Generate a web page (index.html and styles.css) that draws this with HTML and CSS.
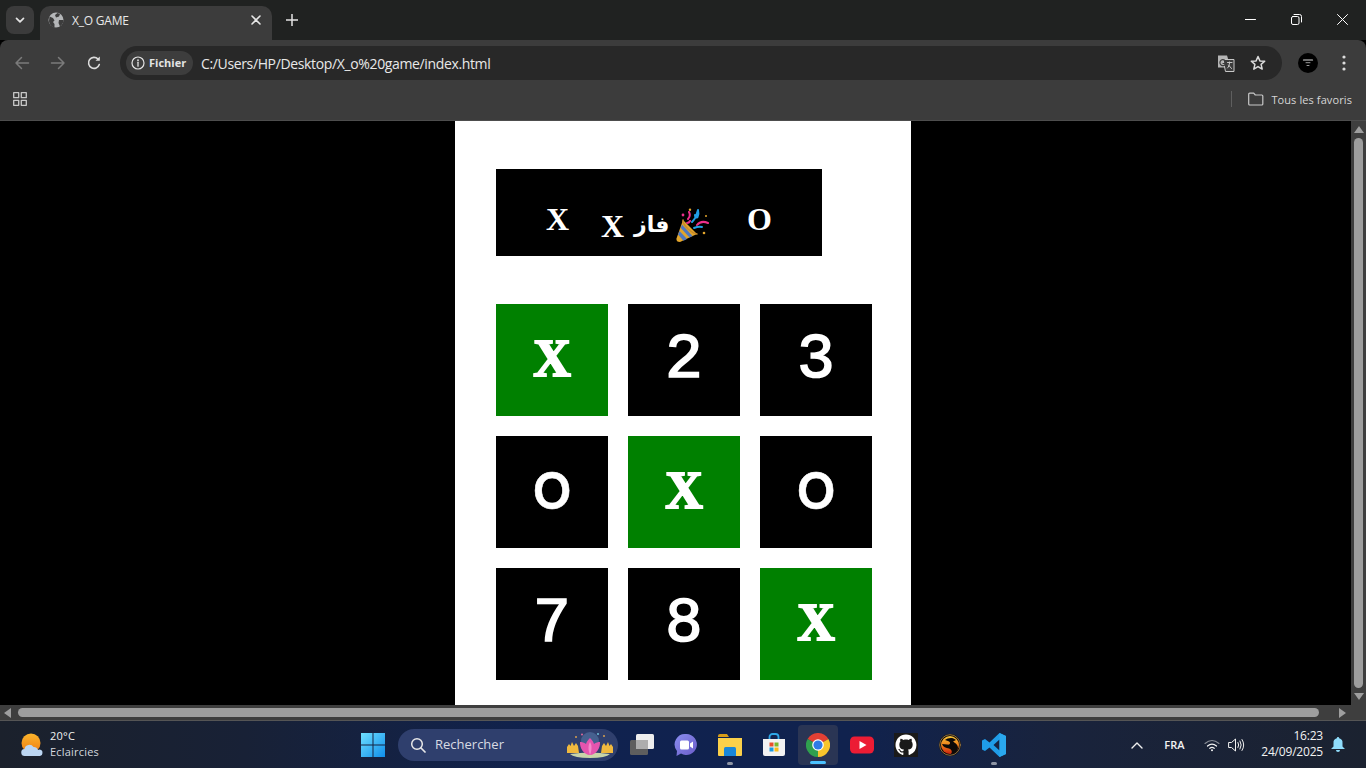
FILE: index.html
```html
<!DOCTYPE html>
<html lang="fr">
<head>
<meta charset="utf-8">
<title>X_O GAME</title>
<link rel="stylesheet" href="styles.css">
</head>
<body>
<div class="screen">
  <header class="tabstrip">
    <div class="tab-search"><svg width="10" height="10" viewBox="0 0 10 10"><path d="M1.5 3.3 5 6.800l3.500-3.500" class="st" stroke="#e3e3e3" stroke-width="1.700"/></svg></div>
    <div class="tab">
      <svg class="globe" width="16" height="16" viewBox="0 0 16 16"><circle cx="8" cy="8" r="7.500" fill="#b4b6b8"/><path d="M1.500 4.500 5 6l1.500 2.500L5 10l1.500 2 0 3.500c-3-.5-5.500-3.500-5.500-6.500zM9.500 1l2.500 1-1 2.500-3 1L7 3zM11 8h4.500c0 3-1.500 5-3.500 6.500L10.500 11z" fill="#3c3c3c"/></svg>
      <span class="tab-title">X_O GAME</span>
      <svg class="tab-x" width="10" height="10" viewBox="0 0 10 10"><path d="M1 1l8 8M9 1 1 9" class="st" stroke="#e6e6e6" stroke-width="1.600"/></svg>
    </div>
    <svg class="plus" width="12" height="12" viewBox="0 0 12 12"><path d="M6 0v12M0 6h12" class="st" stroke="#e3e3e3" stroke-width="1.500"/></svg>
    <div class="win-controls">
      <svg width="11" height="11" viewBox="0 0 11 11"><path d="M0 5.500h10.500" class="st" stroke="#fff"/></svg>
      <svg width="11" height="11" viewBox="0 0 11 11"><rect x=".5" y="2.500" width="7.500" height="8" rx="1.500" class="st" stroke="#fff"/><path d="M3 .5h5.500a2 2 0 0 1 2 2V8" class="st" stroke="#fff"/></svg>
      <svg width="11" height="11" viewBox="0 0 11 11"><path d="M.5.5l10 10M10.500.5l-10 10" class="st" stroke="#fff"/></svg>
    </div>
  </header>

  <nav class="toolbar">
    <svg class="nav-icon first" width="16" height="16" viewBox="0 0 16 16"><path d="M14.500 8H2M7.500 2.500 2 8l5.500 5.500" class="st" stroke="#7b7b7b" stroke-width="1.500"/></svg>
    <svg class="nav-icon" width="16" height="16" viewBox="0 0 16 16"><path d="M1.500 8H14M8.500 2.500 14 8l-5.500 5.500" class="st" stroke="#7b7b7b" stroke-width="1.500"/></svg>
    <svg class="nav-icon" width="16" height="16" viewBox="0 0 16 16"><path d="M13.300 9.500A5.500 5.500 0 1 1 12 4" class="st" stroke="#dcdcdc" stroke-width="1.600"/><path d="M13.800 1.500v4.300H9.500z" fill="#dcdcdc"/></svg>
    <div class="omnibox">
      <div class="chip">
        <svg width="14" height="14" viewBox="0 0 14 14"><circle cx="7" cy="7" r="6" class="st" stroke="#e3e3e3" stroke-width="1.200"/><path d="M7 6.200v4" class="st" stroke="#e3e3e3" stroke-width="1.300"/><circle cx="7" cy="4.200" r=".9" fill="#e3e3e3"/></svg>
        <span class="chip-label">Fichier</span>
      </div>
      <span class="url">C:/Users/HP/Desktop/X_o%20game/index.html</span>
      <svg class="translate" width="18" height="18" viewBox="0 0 18 18"><path d="M1 1.500h9l1 3v9H1z" fill="#b5b5b5"/><path d="M6 5.500h11v12H8.500z" fill="#3c3c3c" stroke="#c7c7c7"/><path d="M8 6.500a3 3 0 1 0 .8 3H6" class="st" stroke="#3c3c3c" stroke-width="1.200"/><path d="M10.500 8.500h4.500M12.500 8v1c0 2-1 4-2 5M11.500 11l3 3.500" class="st" stroke="#c7c7c7"/></svg>
      <svg class="star" width="16" height="16" viewBox="0 0 16 16"><path d="M8 1.500l1.900 4.400 4.800.4-3.600 3.100 1.100 4.700L8 11.600l-4.200 2.500 1.100-4.700L1.300 6.300l4.800-.4z" class="st" stroke="#dcdcdc" stroke-width="1.500"/></svg>
    </div>
    <div class="avatar"><svg width="12" height="8" viewBox="0 0 12 8"><path d="M1.500 1h9" class="st" stroke="#ddd" stroke-width="1.200"/><path d="M4 3.700h4M5 6.500h2" class="st" stroke="#aaa" stroke-width=".9"/></svg></div>
    <svg class="menu" width="4" height="16" viewBox="0 0 4 16"><circle cx="2" cy="2" r="1.600" fill="#dcdcdc"/><circle cx="2" cy="8" r="1.600" fill="#dcdcdc"/><circle cx="2" cy="14" r="1.600" fill="#dcdcdc"/></svg>
  </nav>

  <div class="bookmarks">
    <svg width="16" height="16" viewBox="0 0 16 16"><g class="st" stroke="#c8c8c8" stroke-width="1.300"><rect x="1.700" y="1.700" width="5" height="5"/><rect x="9.300" y="1.700" width="5" height="5"/><rect x="1.700" y="9.300" width="5" height="5"/><rect x="9.300" y="9.300" width="5" height="5"/></g></svg>
    <div class="bm-right">
      <span class="bm-sep"></span>
      <svg width="16" height="14" viewBox="0 0 16 14"><path d="M.7 2.200a1 1 0 0 1 1-1h4l1.600 1.800h6.500a1 1 0 0 1 1 1v8a1 1 0 0 1-1 1H1.700a1 1 0 0 1-1-1z" class="st" stroke="#c8c8c8" stroke-width="1.200"/></svg>
      <span class="bm-label">Tous les favoris</span>
    </div>
  </div>

  <div class="viewport">
    <div class="content-row">
      <main class="page">
        <section class="score">
          <span class="score-x">X</span>
          <span class="winner">X <span class="ar">فاز</span> <svg class="emoji" width="33" height="35" viewBox="0 0 33 35" role="img" aria-label="🎉"><path d="M7 12 21 26 4 34q-4 0-3.500-3.500z" fill="#e2a52c"/><path d="M3.500 23 11 31l-3.500 1.700L2 26.500zM6 16.500 16.500 28l-3 1.500L4.800 20z" fill="#4f78c0"/><path d="M7 12q-1 3 5 9 6 5 9 5" class="st" stroke="#c98a2a" stroke-width="1.500"/><path d="M12 11q3-3 1-7M11 15q2 0 3-2M21 17q4-5 11-2" class="st" stroke="#ee2f8c" stroke-width="2"/><path d="M16 14c3-3 3.500-4 6-12 .8 3 .5 5-.5 7M21 9.500q-2 0-2-2.500M18 20q5-2 8-1" class="st" stroke="#21a0e6" stroke-width="2"/><circle cx="7" cy="7" r="1.400" fill="#ee2f8c"/><circle cx="28" cy="25" r="1.300" fill="#e2a52c"/><circle cx="14" cy="1.800" r="1.200" fill="#e2a52c"/><circle cx="30" cy="8" r="1" fill="#e2a52c"/></svg></span>
          <span class="score-o">O</span>
        </section>
        <section class="board">
          <div class="cell win x">X</div><div class="cell">2</div><div class="cell">3</div>
          <div class="cell o">O</div><div class="cell win x">X</div><div class="cell o">O</div>
          <div class="cell">7</div><div class="cell">8</div><div class="cell win x">X</div>
        </section>
      </main>
      <div class="vscroll">
        <span class="arrow-up"></span>
        <span class="vthumb"></span>
        <span class="arrow-down"></span>
      </div>
    </div>
    <div class="hscroll">
      <span class="arrow-left"></span>
      <span class="hthumb"></span>
      <span class="arrow-right"></span>
    </div>
  </div>

  <footer class="taskbar">
    <div class="weather">
      <svg width="24" height="24" viewBox="0 0 24 24"><defs><linearGradient id="sun" x1="0" y1="0" x2="0" y2="1"><stop offset="0" stop-color="#fbb52c"/><stop offset="1" stop-color="#ef7d12"/></linearGradient></defs><circle cx="11" cy="10" r="9.500" fill="url(#sun)"/><path d="M5 23a3.500 3.500 0 0 1-.5-7 5 5 0 0 1 9-2 4.500 4.500 0 0 1 4.500 3 3 3 0 0 1 4.500 3 3 3 0 0 1-2.500 3z" fill="#bcd6f2"/></svg>
      <div class="weather-text"><span class="temp">20°C</span><span class="cond">Eclaircies</span></div>
    </div>
    <svg class="start" width="24" height="24" viewBox="0 0 24 24"><defs><linearGradient id="w" x1="0" y1="0" x2="1" y2="1"><stop offset="0" stop-color="#6fe0ff"/><stop offset="1" stop-color="#0f8eea"/></linearGradient></defs><path d="M0 0h11.500v11.500H0zM12.500 0H24v11.500H12.500zM0 12.500h11.500V24H0zM12.500 12.500H24V24H12.500z" fill="url(#w)"/></svg>
    <div class="search">
      <svg width="16" height="16" viewBox="0 0 16 16"><circle cx="7" cy="7" r="5.300" class="st" stroke="#e8e8e8" stroke-width="1.500"/><path d="M11 11l4 4" class="st" stroke="#e8e8e8" stroke-width="1.700"/></svg>
      <span class="search-label">Rechercher</span>
      <svg class="lotus" width="46" height="26" viewBox="0 0 46 26"><circle cx="23" cy="9" r="9" fill="#46608f"/><path d="M0 21v-6l2-3 1.500 2 1.500-4 2 4 2-3 2 3 1 7zM46 21v-6l-2-3-1.500 2-1.500-4-2 4-2-3-2 3-1 7z" fill="#f0b93e"/><path d="M3 22q20-3 40 0-4 4-20 4T3 22z" fill="#c9d5a8"/><path d="M23 6c2 2 3.500 4 4 6 2-1.500 4-2 6-2 .5 6-4 13-10 13s-10.500-7-10-13c2 0 4 .5 6 2 .5-2 2-4 4-6z" fill="#e654ae"/><path d="M23 10c2 3 2 8 0 13-2-5-2-10 0-13z" fill="#f589cb"/><circle cx="9" cy="5" r="1" fill="#d8a050"/><circle cx="15" cy="2.500" r="1" fill="#e06a9a"/><circle cx="37" cy="4" r="1" fill="#d8a050"/><circle cx="31" cy="2" r="1" fill="#6fc0d8"/></svg>
    </div>
    <div class="apps">
      <div class="app"><svg width="24" height="24" viewBox="0 0 24 24"><rect x="0" y="7" width="18" height="15" rx="1.500" fill="#5e5e5e"/><rect x="6" y="1" width="18" height="15" rx="1.500" fill="#eeeeee"/><rect x="6" y="7" width="12" height="9" fill="#adadad"/></svg></div>
      <div class="app"><svg width="24" height="24" viewBox="0 0 24 24"><defs><linearGradient id="m" x1="0" y1="0" x2="1" y2="1"><stop offset="0" stop-color="#8a8ef0"/><stop offset="1" stop-color="#6a5cc8"/></linearGradient></defs><path d="M12.500 1a10.500 10.500 0 1 1-5.500 19.500L2.500 23l.5-5A10.500 10.500 0 0 1 12.500 1z" fill="url(#m)"/><rect x="6" y="7.500" width="9" height="9" rx="1.500" fill="#fff"/><path d="M16 10.500l3-2v7l-3-2z" fill="#fff"/></svg></div>
      <div class="app dot"><svg width="24" height="24" viewBox="0 0 24 24"><path d="M0 3a2 2 0 0 1 2-2h7l2 3h-11z" fill="#d79c18"/><path d="M0 5h24v17a1 1 0 0 1-1 1H1a1 1 0 0 1-1-1z" fill="#fbd04a"/><path d="M6 15.500a1.500 1.500 0 0 1 1.500-1.500h9a1.500 1.500 0 0 1 1.500 1.500V23H6z" fill="#1a86d8"/></svg></div>
      <div class="app"><svg width="24" height="24" viewBox="0 0 24 24"><path d="M7.500 6V4a3 3 0 0 1 3-3h3a3 3 0 0 1 3 3v2" class="st" stroke="#2ea7e8" stroke-width="1.800"/><path d="M1 6h22v15a2 2 0 0 1-2 2H3a2 2 0 0 1-2-2z" fill="#f2f2f2"/><rect x="7.500" y="9.500" width="4" height="4" fill="#e8502c"/><rect x="12.500" y="9.500" width="4" height="4" fill="#7cb82c"/><rect x="7.500" y="14.500" width="4" height="4" fill="#1a9ae0"/><rect x="12.500" y="14.500" width="4" height="4" fill="#fbbc18"/></svg></div>
      <div class="app active"><svg width="24" height="24" viewBox="0 0 24 24"><path d="M12 12 1.600 6A12 12 0 0 1 22.400 6z" fill="#e24034"/><path d="M12 12 22.400 6A12 12 0 0 1 12 24z" fill="#f8c52c"/><path d="M12 12 12 24A12 12 0 0 1 1.600 6z" fill="#2fa04e"/><circle cx="12" cy="12" r="5.800" fill="#fff"/><circle cx="12" cy="12" r="4.600" fill="#2f7be6"/></svg></div>
      <div class="app"><svg width="24" height="18" viewBox="0 0 24 18"><rect width="24" height="17" y=".5" rx="4.500" fill="#ec1c34"/><path d="M9.500 5l7 4-7 4z" fill="#fff"/></svg></div>
      <div class="app"><svg width="24" height="24" viewBox="0 0 24 24"><rect width="24" height="24" fill="#1a1a1a"/><g transform="translate(1.500 1.500) scale(1.310)"><path d="M8 0C3.580 0 0 3.580 0 8c0 3.540 2.290 6.530 5.470 7.590.4.070.55-.17.55-.38 0-.19-.01-.82-.01-1.490-2.010.37-2.530-.49-2.690-.94-.09-.23-.48-.94-.82-1.130-.28-.15-.68-.52-.01-.53.63-.01 1.080.58 1.230.82.72 1.210 1.870.87 2.330.66.070-.52.280-.87.510-1.070-1.780-.2-3.640-.89-3.640-3.950 0-.87.310-1.590.820-2.150-.080-.2-.36-1.020.080-2.120 0 0 .67-.21 2.200.82.640-.18 1.320-.27 2-.27.68 0 1.360.09 2 .27 1.530-1.040 2.200-.82 2.200-.82.44 1.100.160 1.920.080 2.120.510.560.820 1.270.820 2.150 0 3.070-1.870 3.750-3.650 3.950.290.250.540.730.540 1.480 0 1.070-.010 1.930-.010 2.200 0 .21.150.460.550.380A8.013 8.013 0 0 0 16 8c0-4.420-3.580-8-8-8z" fill="#fff"/></g></svg></div>
      <div class="app"><svg width="22" height="22" viewBox="0 0 22 22"><defs><linearGradient id="mk" x1="0" y1="0" x2="0" y2="1"><stop offset="0" stop-color="#f4c43a"/><stop offset=".55" stop-color="#ee7a18"/><stop offset="1" stop-color="#c8200e"/></linearGradient></defs><circle cx="11" cy="11" r="11" fill="#0c0a08"/><circle cx="11" cy="11" r="9" fill="url(#mk)"/><circle cx="11" cy="11" r="10.300" class="st" stroke="#b08a50" stroke-width=".8"/><path d="M6 6c3-2.500 8-3 11 0l-3 1.500c2 1.500 5 3 5 6.500-1 4-4 6-7 6 1.500-2 1-4.500-2-5.500C7 14 4 13 3 10l5 .5c2 .5 3.500-.5 3-2C10 7 8 6.500 6 6z" fill="#0c0a08"/></svg></div>
      <div class="app dot"><svg width="24" height="24" viewBox="0 0 24 24"><path d="M17.500 0 24 3v18l-6.500 3L7.500 14.500 3 18l-3-1.500v-9L3 6l4.500 3.500zm0 6.500L11.500 12l6 5.500z" fill="#1f9ce8"/><path d="M17.500 0 24 3v18l-6.500 3z" fill="#2aa8ee"/></svg></div>
    </div>
    <div class="tray">
      <svg class="caret" width="12" height="8" viewBox="0 0 12 8"><path d="M1 7l5-5 5 5" class="st" stroke="#f0f0f0" stroke-width="1.400"/></svg>
      <span class="lang">FRA</span>
      <svg class="wifi" width="16" height="14" viewBox="0 0 16 14"><path d="M1 5.500q7-6 14 0" class="st" stroke="#8a8f98" stroke-width="1.100"/><path d="M3.500 8q4.500-3.800 9 0M5.800 10.300q2.200-1.800 4.400 0" class="st" stroke="#f4f4f4" stroke-width="1.200"/><circle cx="8" cy="12.300" r="1" fill="#f4f4f4"/></svg>
      <svg class="vol" width="17" height="14" viewBox="0 0 17 14"><path d="M1 4.500h2.500L7.500 1v12L3.500 9.500H1z" class="st" stroke="#f0f0f0"/><path d="M10 4.500q1.500 2.500 0 5M12 3q2.500 4 0 8M14 1.500q3.500 5.500 0 11" class="st" stroke="#f0f0f0"/></svg>
      <div class="clock"><span>16:23</span><span>24/09/2025</span></div>
      <svg class="bell" width="14" height="15" viewBox="0 0 14 15"><path d="M7 0a1.200 1.200 0 0 1 1.200 1.200A4.500 4.500 0 0 1 11.500 6v3.500L14 12H0l2.500-2.500V6a4.500 4.500 0 0 1 3.300-4.800A1.200 1.200 0 0 1 7 0z" fill="#8fdcfb"/><path d="M5 13h4a2 2 0 0 1-4 0z" fill="#8fdcfb"/></svg>
    </div>
  </footer>
</div>
</body>
</html>
```

FILE: styles.css
```css
* { box-sizing: border-box; }
html, body { margin: 0; padding: 0; height: 100%; overflow: hidden; }
body { font-family: "Open Sans", "Noto Sans", sans-serif; background: #000; }
svg { display: block; flex: none; }
.st { fill: none; stroke-linecap: round; stroke-linejoin: round; }
.screen { width: 1366px; height: 768px; display: flex; flex-direction: column; }

/* tab strip */
.tabstrip { height: 40px; flex: none; background: #202221; display: flex; align-items: flex-start; padding: 6px 0 0 6px; }
.tab-search { width: 28px; height: 28px; border-radius: 8px; background: #3b3b3b; display: flex; align-items: center; justify-content: center; }
.tab { width: 232px; height: 34px; margin-left: 6px; background: #3c3c3c; border-radius: 10px 10px 0 0; display: flex; align-items: center; padding: 0 11px 6px 8px; color: #e8e8e8; font-size: 12px; }
.globe { margin-right: 8px; }
.tab-title { flex: 1; letter-spacing: -.2px; }
.plus { margin: 8px 0 0 14px; }
.win-controls { margin-left: auto; margin-top: 8px; display: flex; gap: 35px; padding-right: 18px; }

/* toolbar */
.toolbar { height: 40px; flex: none; background: #3c3c3c; border-radius: 8px 8px 0 0; display: flex; align-items: center; padding: 6px 0 0 14px; }
.nav-icon { margin-right: 20px; }
.omnibox { width: 1162px; height: 34px; margin-left: -2px; background: #282828; border-radius: 17px; display: flex; align-items: center; padding: 0 16px 0 6px; }
.chip { height: 24px; width: 67px; border-radius: 12px; background: #3d3d3d; display: flex; align-items: center; gap: 4px; padding-left: 5px; color: #e3e3e3; font-size: 11px; font-weight: 700; }
.chip-label { padding-bottom: 2px; }
.url { flex: 1; margin-left: 8px; color: #e8e8e8; font-size: 14px; letter-spacing: -.36px; }
.translate { margin-right: 15px; }
.avatar { width: 20px; height: 20px; border-radius: 50%; background: #000; margin-left: 16px; display: flex; align-items: center; justify-content: center; }
.menu { margin-left: 24px; }

/* bookmarks */
.bookmarks { height: 41px; flex: none; background: #3c3c3c; border-bottom: 1px solid #4d4d4d; display: flex; align-items: center; padding: 0 14px 2px 12px; }
.bm-right { margin-left: auto; display: flex; align-items: center; }
.bm-sep { width: 1px; height: 16px; background: #5f5f5f; margin-right: 16px; }
.bm-label { margin-left: 7px; color: #d6d6d6; font-size: 11px; letter-spacing: .1px; }

/* viewport */
.viewport { flex: none; height: 600px; display: flex; flex-direction: column; background: #000; }
.content-row { flex: none; height: 584px; display: flex; }
.page { flex: none; width: 456px; height: 584px; margin-left: 455px; margin-right: 440px; background: #fff; padding: 48px 0 0 41px; }
.score { width: 326px; height: 87px; background: #000; color: #fff; font-family: "Liberation Serif", serif; font-weight: 700; font-size: 32px; line-height: 36px; display: flex; align-items: flex-start; padding: 32px 0 0 50px; }
.score-x { width: 55px; }
.winner { display: flex; align-items: center; padding-top: 6px; width: 146px; white-space: pre; }
.ar { flex: none; width: 34px; margin-left: 2px; font-family: "DejaVu Sans", sans-serif; font-size: 22px; font-weight: 700; line-height: 36px; padding-bottom: 2px; }
.emoji { margin: -2px 0 0 8px; }
.score-o { width: 30px; }
.board { margin-top: 48px; display: grid; grid-template-columns: repeat(3, 112px); grid-auto-rows: 112px; gap: 20px; }
.cell { background: #000; color: #fff; font-family: "Liberation Mono", monospace; font-weight: 400; font-size: 63px; -webkit-text-stroke: 1.6px #fff; display: flex; align-items: center; justify-content: center; padding-top: 1px; }
.cell.x { font-family: "Liberation Serif", serif; font-weight: 700; font-size: 52px; -webkit-text-stroke: 2px #fff; padding: 0 0 4px; }
.cell.o { font-family: Inter, sans-serif; font-weight: 600; font-size: 51px; -webkit-text-stroke: .5px #fff; padding: 0 0 3px; }
.cell.win { background: #008000; }

/* scrollbars */
.vscroll { flex: none; width: 15px; height: 584px; background: #3e3e3e; display: flex; flex-direction: column; align-items: center; padding: 5px 0; }
.vthumb { flex: 1; width: 9px; margin: 5px 0 5px; border-radius: 5px; background: #9e9e9e; }
.arrow-up { width: 0; height: 0; border: 5px solid transparent; border-top: 0; border-bottom: 7px solid #9e9e9e; }
.arrow-down { width: 0; height: 0; border: 5px solid transparent; border-bottom: 0; border-top: 7px solid #9e9e9e; }
.hscroll { flex: none; height: 16px; background: #3e3e3e; border-bottom: 1px solid #555; display: flex; align-items: center; padding-left: 4px; }
.hthumb { width: 1301px; height: 9px; border-radius: 5px; background: #9e9e9e; margin: 0 20px 0 7px; }
.arrow-left { width: 0; height: 0; border: 5px solid transparent; border-left: 0; border-right: 7px solid #9e9e9e; }
.arrow-right { width: 0; height: 0; border: 5px solid transparent; border-right: 0; border-left: 7px solid #9e9e9e; }

/* taskbar */
.taskbar { flex: 1; min-height: 0; display: flex; align-items: center; background: linear-gradient(90deg, #1b212c 0, #182136 18%, #10224f 40%, #10224e 62%, #19233c 78%, #1b2230 100%); color: #f2f2f2; }
.weather { width: 361px; display: flex; align-items: center; gap: 6px; padding-left: 20px; }
.weather-text { display: flex; flex-direction: column; font-size: 11px; line-height: 16px; letter-spacing: .2px; padding-bottom: 2px; }
.cond { color: #d4d8de; }
.search { width: 220px; height: 32px; margin-left: 13px; border-radius: 16px; background: #2f3f6d; display: flex; align-items: center; padding: 0 5px 0 12px; color: #d8dbe3; font-size: 13px; }
.search-label { flex: 1; margin-left: 9px; padding-bottom: 2px; }
.apps { display: flex; margin-left: 2px; }
.app { width: 44px; height: 40px; display: flex; align-items: center; justify-content: center; position: relative; }
.app.active { margin: 0 2px; width: 40px; background: #2a3554; border-radius: 4px; }
.app.dot::after { content: ""; position: absolute; bottom: 0; left: 19px; width: 6px; height: 3px; border-radius: 2px; background: #8e95a4; }
.app.active::after { content: ""; position: absolute; bottom: 1px; left: 12px; width: 16px; height: 3px; border-radius: 2px; background: #4cc2ff; }
.tray { display: flex; align-items: center; margin-left: auto; padding-right: 21px; }
.lang { margin-left: 21px; width: 22px; font-size: 11px; font-weight: 600; }
.wifi { margin-left: 18px; }
.vol { margin-left: 8px; }
.clock { margin-left: 16px; display: flex; flex-direction: column; align-items: flex-end; font-size: 12px; line-height: 16px; letter-spacing: -.2px; padding-bottom: 1px; }
.bell { margin-left: 8px; }
```
